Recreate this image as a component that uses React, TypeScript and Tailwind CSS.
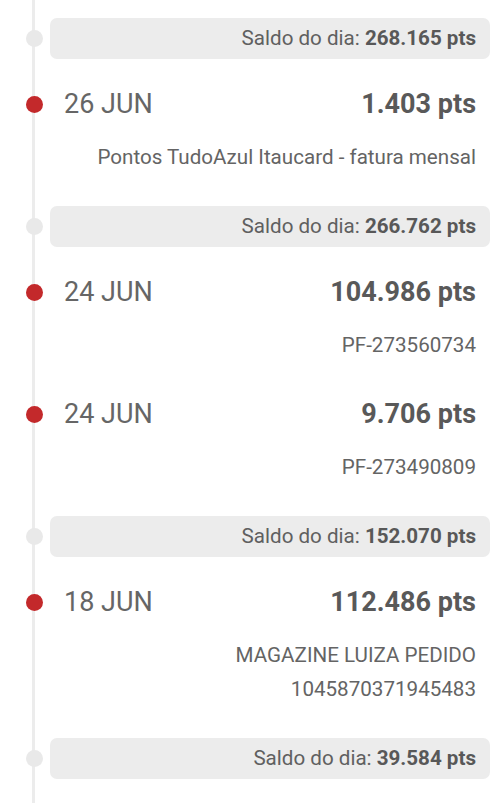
import React from "react";

type Entry =
  | { kind: "saldo"; value: string }
  | { kind: "event"; date: string; amount: string; lines: string[] };

const ENTRIES: Entry[] = [
  { kind: "saldo", value: "268.165 pts" },
  { kind: "event", date: "26 JUN", amount: "1.403 pts", lines: ["Pontos TudoAzul Itaucard - fatura mensal"] },
  { kind: "saldo", value: "266.762 pts" },
  { kind: "event", date: "24 JUN", amount: "104.986 pts", lines: ["PF-273560734"] },
  { kind: "event", date: "24 JUN", amount: "9.706 pts", lines: ["PF-273490809"] },
  { kind: "saldo", value: "152.070 pts" },
  { kind: "event", date: "18 JUN", amount: "112.486 pts", lines: ["MAGAZINE LUIZA PEDIDO", "1045870371945483"] },
  { kind: "saldo", value: "39.584 pts" },
];

function SaldoRow({ value, first }: { value: string; first: boolean }) {
  return (
    <div className={`flex items-center ${first ? "" : "mt-[32px]"}`}>
      <div className="w-[50px] shrink-0">
        <div className="ml-[26px] h-[17px] w-[17px] rounded-full bg-[#e9e9e9]" />
      </div>
      <div className="mr-[10px] flex h-[41px] flex-1 items-center justify-end rounded-[7px] bg-[#ececec] px-[14px] text-[20.6px] text-[#606060]">
        <span>
          Saldo do dia: <span className="font-bold text-[#585858]">{value}</span>
        </span>
      </div>
    </div>
  );
}

function EventRow({
  date,
  amount,
  lines,
  afterEvent,
}: {
  date: string;
  amount: string;
  lines: string[];
  afterEvent: boolean;
}) {
  return (
    <div className={afterEvent ? "mt-[37px]" : "mt-[30px]"}>
      <div className="flex h-[30px] items-center">
        <div className="w-[50px] shrink-0">
          <div className="ml-[26px] h-[17px] w-[17px] rounded-full bg-[#c3292b]" />
        </div>
        <div className="flex flex-1 items-center justify-between pl-[14px] pr-[24px]">
          <span className="text-[27px] leading-[30px] text-[#666]">{date}</span>
          <span className="text-[27px] font-bold leading-[30px] text-[#595959]">{amount}</span>
        </div>
      </div>
      <div className="mt-[21px] pl-[60px] pr-[24px] text-right text-[20.6px] leading-[34px] text-[#646464]">
        {lines.map((l) => (
          <div key={l}>{l}</div>
        ))}
      </div>
    </div>
  );
}

export default function App() {
  return (
    <div className="relative h-[803px] w-[500px] overflow-hidden bg-white font-['Roboto',sans-serif]">
      {/* timeline rail */}
      <div className="absolute bottom-0 left-[32px] top-0 w-[3px] bg-[#ececec]" />
      <div className="relative pt-[18px]">
        {ENTRIES.map((e, i) =>
          e.kind === "saldo" ? (
            <SaldoRow key={i} value={e.value} first={i === 0} />
          ) : (
            <EventRow
              key={i}
              date={e.date}
              amount={e.amount}
              lines={e.lines}
              afterEvent={ENTRIES[i - 1]?.kind === "event"}
            />
          )
        )}
      </div>
    </div>
  );
}
